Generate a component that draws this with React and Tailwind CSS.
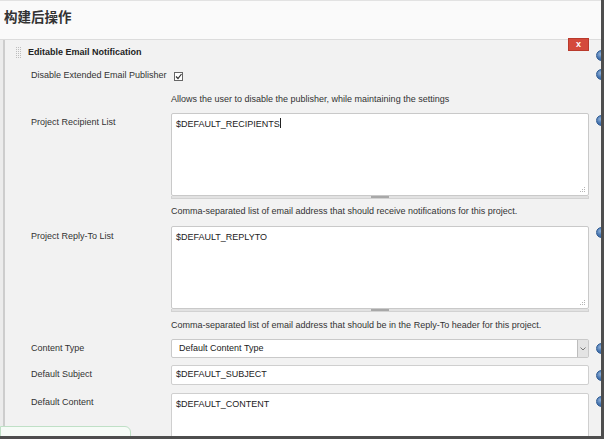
import React from 'react';

const font = { fontFamily: '"Liberation Sans", Arial, sans-serif' };

function HelpIcon() {
  return (
    <div className="ml-[7px] w-[11px] h-[11px] shrink-0 rounded-full border border-[#2f5b92] bg-[radial-gradient(circle_at_35%_35%,#8fb0d8_0%,#4a78b2_45%,#2f5f9c_100%)]" />
  );
}

function Grip() {
  return (
    <svg width="6" height="6" viewBox="0 0 6 6" className="absolute right-[2px] bottom-[2px]">
      <rect x="4" y="0" width="1" height="1" fill="#b5b5b5" />
      <rect x="2" y="2" width="1" height="1" fill="#b5b5b5" />
      <rect x="4" y="2" width="1" height="1" fill="#b5b5b5" />
      <rect x="0" y="4" width="1" height="1" fill="#b5b5b5" />
      <rect x="2" y="4" width="1" height="1" fill="#b5b5b5" />
      <rect x="4" y="4" width="1" height="1" fill="#b5b5b5" />
    </svg>
  );
}

function TextArea({ value, height, cursor }) {
  return (
    <div className="w-[418px] shrink-0 flex flex-col">
      <div className={`relative w-full ${height} bg-white border border-[#c9c9c9] rounded-[2px] pl-[4px] pt-[4px] leading-[12px] text-[#222]`}>
        {value}
        {cursor && <span className="inline-block w-px h-[10px] bg-[#222] align-[-1px]" />}
        <Grip />
      </div>
      <div className="w-full h-[3px] bg-[#e2e2e2] border-x border-b border-[#d2d2d2] flex justify-center">
        <div className="w-[18px] h-[2px] bg-[#a8a8a8]" />
      </div>
    </div>
  );
}

function Desc({ children, pt }) {
  return (
    <div className={`h-[27px] shrink-0 pl-[166px] ${pt} leading-[12px] whitespace-nowrap`}>{children}</div>
  );
}

export default function App() {
  return (
    <div className="w-[604px] h-[439px] overflow-hidden bg-[#4e4e4e]" style={font}>
      <div className="relative w-[601px] h-[436px] overflow-hidden flex flex-col bg-[#f2f2f2] text-[9px] text-[#333]">
        {/* header */}
        <div className="h-[40px] shrink-0 bg-[#fafafa] border-t border-[#e2e2e2] border-b border-b-[#dcdcdc] pl-[4px] pt-[5px]">
          <h2
            className="text-[13.5px] leading-[20px] font-bold text-[#333]"
            style={{ fontFamily: '"Noto Sans CJK SC", "Liberation Sans", sans-serif' }}
          >
            构建后操作
          </h2>
        </div>

        {/* panel */}
        <div className="flex-1 flex min-h-0">
          <div className="w-[3px] shrink-0 bg-[#ececec]" />
          <div className="w-[2px] shrink-0 bg-[#cdcdcd]" />
          <div className="flex-1 flex flex-col min-w-0">
            {/* title */}
            <div className="h-[26px] shrink-0 flex items-center pl-[11px] gap-[6px]">
              <svg width="6" height="12" viewBox="0 0 6 12">
                {[0, 2, 4, 6, 8, 10].map((y) =>
                  [0, 2, 4].map((x) => (
                    <rect key={`${x}-${y}`} x={x} y={y} width="1" height="1" fill="#bdbdbd" />
                  ))
                )}
              </svg>
              <span className="font-bold text-[#222]">Editable Email Notification</span>
            </div>

            {/* disable checkbox */}
            <div className="h-[20px] shrink-0 flex items-center pl-[26px]">
              <div className="w-[140px] shrink-0">Disable Extended Email Publisher</div>
              <div className="w-[418px] shrink-0 flex items-center">
                <div className="ml-[3px] w-[9px] h-[9px] border border-[#666] bg-white flex items-center justify-center">
                  <svg width="7" height="7" viewBox="0 0 7 7">
                    <path d="M1 3.5 L3 5.5 L6.5 1" fill="none" stroke="#333" strokeWidth="1.2" />
                  </svg>
                </div>
              </div>
              <div className="-mt-[4px]"><HelpIcon /></div>
            </div>
            <Desc pt="pt-[7px]">Allows the user to disable the publisher, while maintaining the settings</Desc>

            {/* recipients */}
            <div className="shrink-0 flex items-start pl-[26px]">
              <div className="w-[140px] shrink-0 pt-[3px] leading-[12px]">Project Recipient List</div>
              <TextArea value="$DEFAULT_RECIPIENTS" height="h-[83px]" cursor />
              <div className="mt-[2px]"><HelpIcon /></div>
            </div>
            <Desc pt="pt-[6px]">Comma-separated list of email address that should receive notifications for this project.</Desc>

            {/* reply-to */}
            <div className="shrink-0 flex items-start pl-[26px]">
              <div className="w-[140px] shrink-0 pt-[4px] leading-[12px]">Project Reply-To List</div>
              <TextArea value="$DEFAULT_REPLYTO" height="h-[83px]" />
              <div className="mt-px"><HelpIcon /></div>
            </div>
            <Desc pt="pt-[7px]">Comma-separated list of email address that should be in the Reply-To header for this project.</Desc>

            {/* content type */}
            <div className="h-[19px] shrink-0 flex items-center pl-[26px]">
              <div className="w-[140px] shrink-0">Content Type</div>
              <div className="w-[418px] h-[19px] shrink-0 flex bg-white border border-[#c9c9c9] rounded-[2px]">
                <div className="flex-1 pl-[7px] flex items-center text-[#222]">Default Content Type</div>
                <div className="w-[11px] bg-[#e4e4e4] border-l border-[#bdbdbd] flex items-center justify-center">
                  <svg width="6" height="4" viewBox="0 0 6 4">
                    <path d="M0.5 0.5 L3 3 L5.5 0.5" fill="none" stroke="#777" strokeWidth="1" />
                  </svg>
                </div>
              </div>
              <HelpIcon />
            </div>

            {/* subject */}
            <div className="h-[20px] shrink-0 mt-[7px] flex items-center pl-[26px]">
              <div className="w-[140px] shrink-0">Default Subject</div>
              <div className="w-[418px] h-[20px] shrink-0 bg-white border border-[#cfcfcf] rounded-[2px] pl-[4px] flex items-center text-[#222]">
                $DEFAULT_SUBJECT
              </div>
              <HelpIcon />
            </div>

            {/* content */}
            <div className="shrink-0 mt-[8px] flex items-start pl-[26px]">
              <div className="w-[140px] shrink-0 pt-[3px] leading-[12px]">Default Content</div>
              <div className="w-[418px] h-[60px] shrink-0 bg-white border border-[#cfcfcf] rounded-[2px] pl-[4px] pt-[4px] leading-[12px] text-[#222]">
                $DEFAULT_CONTENT
              </div>
              <div className="mt-[3px]"><HelpIcon /></div>
            </div>
          </div>
        </div>

        {/* delete button */}
        <button className="absolute left-[568px] top-[38px] w-[21px] h-[13px] bg-[#d44a3b] border border-[#b93a2c] text-white text-[9px] font-bold leading-[11px] flex items-center justify-center">
          x
        </button>

        {/* help icon next to the title */}
        <div className="absolute left-[589px] top-[50px]"><HelpIcon /></div>

        {/* bottom-left tab */}
        <div className="absolute left-0 top-[426px] w-[131px] h-[14px] bg-[#f6fbf7] border border-[#bfe0c6] rounded-tr-[6px]" />
      </div>
    </div>
  );
}
